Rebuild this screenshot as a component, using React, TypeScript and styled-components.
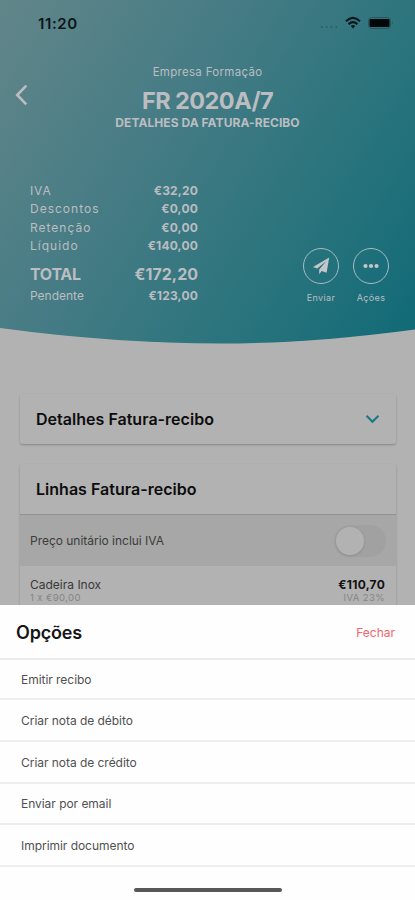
import React from "react";
import styled, { createGlobalStyle } from "styled-components";

const GlobalStyle = createGlobalStyle`
  *, *::before, *::after { box-sizing: border-box; }
  body { margin: 0; background: #b2b2b2; font-family: Inter, "Liberation Sans", sans-serif; }
  button { font: inherit; color: inherit; background: none; border: 0; padding: 0; }
  h1, h2, p { margin: 0; }
`;

const Screen = styled.div`
  width: 415px;
  height: 900px;
  overflow: hidden;
  display: flex;
  flex-direction: column;
`;

const Page = styled.main`
  height: 605px;
  flex: none;
  overflow: hidden;
  background: #b2b2b2;
`;

const Hero = styled.header`
  height: 344px;
  color: #bbbdc1;
  background: linear-gradient(122deg, #62868a 0%, #447b84 40%, #2a747d 70%, #106a77 100%);
  clip-path: path("M0 0H415V329.5Q310 343.5 222 343.5Q115 343.5 0 328Z");
`;

const StatusBar = styled.div`
  height: 46px;
  padding: 0 21px 0 38px;
  display: flex;
  align-items: center;
  justify-content: space-between;
  color: #0b1719;
`;

const Clock = styled.span`
  font-size: 15px;
  font-weight: 600;
  letter-spacing: 0.6px;
`;

const StatusIcons = styled.div`
  display: flex;
  align-items: center;
  svg { display: block; }
`;

const TitleBar = styled.div`
  height: 90px;
  padding: 0 15px;
  display: grid;
  grid-template-columns: 14px 1fr 14px;
`;

const BackButton = styled.button`
  height: 24px;
  margin-top: 37px;
  svg { display: block; }
`;

const Titles = styled.div`
  padding-top: 17px;
  display: flex;
  flex-direction: column;
  align-items: center;
  white-space: nowrap;
`;

const Company = styled.p`
  font-size: 11.5px;
  line-height: 18px;
  letter-spacing: 0.3px;
`;

const DocNumber = styled.h1`
  margin-top: 6px;
  font-size: 23.5px;
  font-weight: 700;
  line-height: 28px;
  letter-spacing: -0.55px;
`;

const DocKind = styled.p`
  margin-top: 1px;
  font-size: 12px;
  font-weight: 700;
  line-height: 14px;
  letter-spacing: 0.06px;
`;

const Summary = styled.div`
  margin-top: 45px;
  padding: 0 26px 0 30px;
  display: flex;
  justify-content: space-between;
  align-items: flex-start;
`;

const Totals = styled.dl`
  margin: 0;
  width: 168px;
`;

const TotalRow = styled.div<{ $h: number; $size?: number; $strong?: boolean; $spacing: number }>`
  height: ${(p) => p.$h}px;
  display: flex;
  align-items: center;
  justify-content: space-between;
  dt, dd { margin: 0; }
  dt {
    font-size: ${(p) => p.$size ?? 12}px;
    font-weight: ${(p) => (p.$strong ? 700 : 400)};
    letter-spacing: ${(p) => p.$spacing}px;
  }
  dd {
    font-size: ${(p) => p.$size ?? 12}px;
    font-weight: 700;
    letter-spacing: ${(p) => (p.$strong ? 0 : 0.18)}px;
  }
`;

const Actions = styled.div`
  margin-top: 67px;
  display: flex;
  gap: 14px;
`;

const Action = styled.button`
  width: 36px;
  display: flex;
  flex-direction: column;
  align-items: center;
  font-size: 9px;
  line-height: 12px;
  letter-spacing: 0.4px;
`;

const Round = styled.span`
  width: 36px;
  height: 36px;
  margin-bottom: 8px;
  display: grid;
  place-items: center;
  border: 1px solid #a6bcc0;
  border-radius: 50%;
`;

const Card = styled.section<{ $top: number }>`
  margin: ${(p) => p.$top}px 19px 0 20px;
  background: #b2b2b2;
  border-radius: 2px;
  box-shadow: 0 1px 2px rgba(0, 0, 0, 0.26);
`;

const CardHead = styled.div`
  height: 50px;
  padding: 0 16px;
  display: flex;
  align-items: center;
  justify-content: space-between;
`;

const CardTitle = styled.h2`
  font-size: 16px;
  font-weight: 600;
  color: #0d0d0d;
  letter-spacing: 0.02px;
`;

const SwitchRow = styled.div`
  height: 52px;
  padding: 0 10px;
  display: flex;
  align-items: center;
  justify-content: space-between;
  border-top: 1px solid #929292;
  background: #a7a7a7;
  color: #3c3c3c;
  font-size: 12px;
  letter-spacing: -0.02px;
`;

const Switch = styled.span`
  width: 52px;
  height: 32px;
  padding: 2px;
  border-radius: 16px;
  background: #a1a1a1;
  &::before {
    content: "";
    display: block;
    width: 28px;
    height: 28px;
    border-radius: 50%;
    background: #b2b2b2;
    box-shadow: 0 1px 3px rgba(0, 0, 0, 0.12);
  }
`;

const LineItem = styled.div`
  height: 60px;
  padding: 11px 11px 0 10px;
  display: flex;
  justify-content: space-between;
  font-size: 12px;
  line-height: 15px;
  color: #393939;
`;

const ItemColumn = styled.div<{ $end?: boolean }>`
  display: flex;
  flex-direction: column;
  align-items: ${(p) => (p.$end ? "flex-end" : "flex-start")};
`;

const ItemName = styled.span`
  letter-spacing: 0;
`;

const ItemPrice = styled.span`
  font-weight: 700;
  letter-spacing: 0.25px;
  color: #111;
`;

const ItemNote = styled.span`
  font-size: 9.5px;
  line-height: 12px;
  letter-spacing: 0.4px;
  color: #858585;
`;

const Sheet = styled.section`
  height: 295px;
  flex: none;
  background: #fefefe;
`;

const SheetHead = styled.div`
  height: 55px;
  padding: 1px 20px 0 16px;
  display: flex;
  align-items: center;
  justify-content: space-between;
  border-bottom: 2px solid #ebebeb;
`;

const SheetTitle = styled.h2`
  font-size: 18px;
  font-weight: 600;
  letter-spacing: -0.2px;
  color: #161616;
`;

const CloseButton = styled.button`
  color: #f4646c;
  font-size: 12px;
`;

const Options = styled.ul`
  margin: 0;
  padding: 0;
  list-style: none;
`;

const Option = styled.li<{ $h: number }>`
  height: ${(p) => p.$h}px;
  padding-left: 21px;
  display: flex;
  align-items: center;
  border-bottom: 2px solid #eeeeee;
  font-size: 12px;
  line-height: 15px;
  color: #505050;
  letter-spacing: -0.04px;
`;

const HomeBar = styled.div`
  width: 148px;
  height: 4px;
  margin: 21px auto 0 134px;
  border-radius: 2px;
  background: #575757;
`;

const OPTIONS = [
  { label: "Emitir recibo", height: 40 },
  { label: "Criar nota de débito", height: 42 },
  { label: "Criar nota de crédito", height: 42 },
  { label: "Enviar por email", height: 41 },
  { label: "Imprimir documento", height: 42 },
];

export default function App() {
  return (
    <Screen>
      <GlobalStyle />
      <Page>
        <Hero>
          <StatusBar>
            <Clock>11:20</Clock>
            <StatusIcons>
              <svg width="74" height="14" viewBox="0 0 74 14">
                <g fill="#2c6067">
                  <circle cx="1.8" cy="11" r="1" />
                  <circle cx="6.6" cy="11" r="1" />
                  <circle cx="11.4" cy="11" r="1" />
                  <circle cx="16.2" cy="11" r="1" />
                </g>
                <g fill="none" stroke="#0b171b" strokeWidth="2.1">
                  <path d="M26 5.3Q33 -1.4 40 5.3" />
                  <path d="M28.6 8.2Q33 4 37.4 8.2" />
                </g>
                <path d="M30.8 10Q33 8.2 35.2 10L33 12.6Z" fill="#0b171b" />
                <rect x="48.5" y="1.5" width="22" height="11" rx="3" fill="none" stroke="#28565c" />
                <rect x="49.5" y="3" width="20" height="8" rx="1.2" fill="#020708" />
                <path d="M72 5Q73.6 7 72 9Z" fill="#28565c" />
              </svg>
            </StatusIcons>
          </StatusBar>
          <TitleBar>
            <BackButton aria-label="Voltar">
              <svg width="14" height="24" viewBox="0 0 14 24" fill="none" stroke="currentColor" strokeWidth="2.6">
                <path d="M11.3 2.7L2.2 12L11.3 21.3" />
              </svg>
            </BackButton>
            <Titles>
              <Company>Empresa Formação</Company>
              <DocNumber>FR 2020A/7</DocNumber>
              <DocKind>DETALHES DA FATURA-RECIBO</DocKind>
            </Titles>
          </TitleBar>
          <Summary>
            <Totals>
              <TotalRow $h={18.5} $spacing={0.9}><dt>IVA</dt><dd>€32,20</dd></TotalRow>
              <TotalRow $h={18.5} $spacing={1}><dt>Descontos</dt><dd>€0,00</dd></TotalRow>
              <TotalRow $h={18.5} $spacing={1}><dt>Retenção</dt><dd>€0,00</dd></TotalRow>
              <TotalRow $h={18.5} $spacing={1}><dt>Líquido</dt><dd>€140,00</dd></TotalRow>
              <TotalRow $h={38} $size={16} $strong $spacing={-0.3}><dt>TOTAL</dt><dd>€172,20</dd></TotalRow>
              <TotalRow $h={5} $spacing={0}><dt>Pendente</dt><dd>€123,00</dd></TotalRow>
            </Totals>
            <Actions>
              <Action>
                <Round>
                  <svg width="18" height="18" viewBox="0 0 18 18" fill="#c4c6c9">
                    <path d="M17.2 .6L1 9.9L5.2 11.6L14.2 4.3L7.2 12.4V17.2L9.6 13.9L14.6 15.8Z" />
                  </svg>
                </Round>
                Enviar
              </Action>
              <Action>
                <Round>
                  <svg width="16" height="6" viewBox="0 0 16 6" fill="#c4c6c9">
                    <circle cx="2.5" cy="3" r="2.1" />
                    <circle cx="8" cy="3" r="2.1" />
                    <circle cx="13.5" cy="3" r="2.1" />
                  </svg>
                </Round>
                Ações
              </Action>
            </Actions>
          </Summary>
        </Hero>
        <Card $top={50}>
          <CardHead>
            <CardTitle>Detalhes Fatura-recibo</CardTitle>
            <svg width="15" height="10" viewBox="0 0 15 10" fill="none" stroke="#187985" strokeWidth="2">
              <path d="M1.5 1.7L7.5 7.8L13.5 1.7" />
            </svg>
          </CardHead>
        </Card>
        <Card $top={20}>
          <CardHead>
            <CardTitle>Linhas Fatura-recibo</CardTitle>
          </CardHead>
          <SwitchRow>
            Preço unitário inclui IVA
            <Switch />
          </SwitchRow>
          <LineItem>
            <ItemColumn>
              <ItemName>Cadeira Inox</ItemName>
              <ItemNote>1 x €90,00</ItemNote>
            </ItemColumn>
            <ItemColumn $end>
              <ItemPrice>€110,70</ItemPrice>
              <ItemNote>IVA 23%</ItemNote>
            </ItemColumn>
          </LineItem>
        </Card>
      </Page>
      <Sheet>
        <SheetHead>
          <SheetTitle>Opções</SheetTitle>
          <CloseButton>Fechar</CloseButton>
        </SheetHead>
        <Options>
          {OPTIONS.map((o) => (
            <Option key={o.label} $h={o.height}>{o.label}</Option>
          ))}
        </Options>
        <HomeBar />
      </Sheet>
    </Screen>
  );
}
